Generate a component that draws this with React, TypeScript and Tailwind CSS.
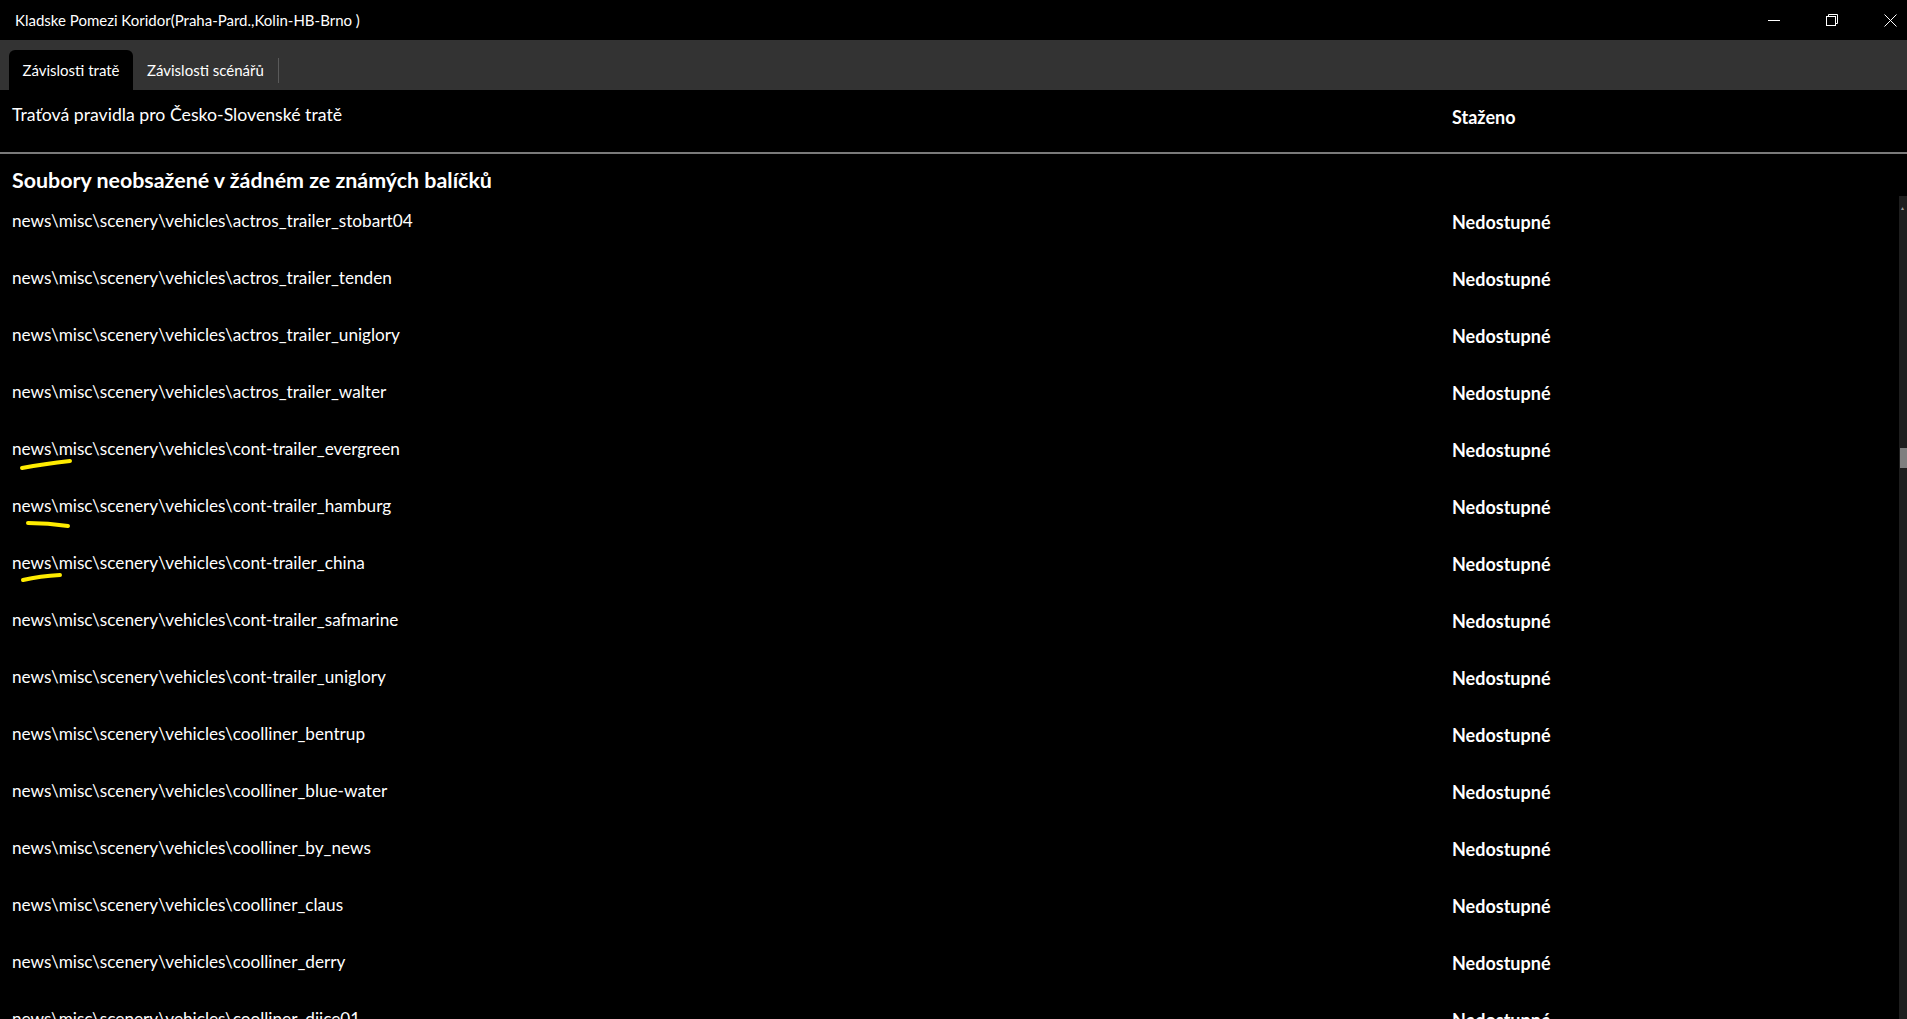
import React from "react";

const FONT = "font-['Lato','Open_Sans',sans-serif]";

const ROWS = [
  "actros_trailer_stobart04",
  "actros_trailer_tenden",
  "actros_trailer_uniglory",
  "actros_trailer_walter",
  "cont-trailer_evergreen",
  "cont-trailer_hamburg",
  "cont-trailer_china",
  "cont-trailer_safmarine",
  "cont-trailer_uniglory",
  "coolliner_bentrup",
  "coolliner_blue-water",
  "coolliner_by_news",
  "coolliner_claus",
  "coolliner_derry",
  "coolliner_djice01",
];

// hand-drawn highlighter marks under "news\" (row index -> path in row coords)
const MARKS: Record<number, string> = {
  4: "M22 44 Q44 40 70 37",
  5: "M28 42 Q48 42 68 45",
  6: "M23 42 Q40 38 60 37",
};

function TitleBar() {
  return (
    <div className="flex h-[40px] items-center justify-between bg-black text-white">
      <div className="pl-[15px] text-[15px]">Kladske Pomezi Koridor(Praha-Pard.,Kolin-HB-Brno )</div>
      <div className="flex h-full items-center gap-[24px]">
        <div className="flex h-full w-[34px] items-center justify-center">
          <svg width="12" height="12" viewBox="0 0 12 12">
            <path d="M0 6.5 H12" stroke="white" strokeWidth="1" />
          </svg>
        </div>
        <div className="flex h-full w-[34px] items-center justify-center">
          <svg width="12" height="12" viewBox="0 0 12 12" fill="none" stroke="white" strokeWidth="1">
            <rect x="0.5" y="2.5" width="9" height="9" />
            <path d="M2.5 2.5 V0.5 H11.5 V9.5 H9.5" />
          </svg>
        </div>
        <div className="flex h-full w-[34px] items-center justify-center">
          <svg width="13" height="13" viewBox="0 0 13 13" fill="none" stroke="white" strokeWidth="1">
            <path d="M0.5 0.5 L12.5 12.5 M12.5 0.5 L0.5 12.5" />
          </svg>
        </div>
      </div>
    </div>
  );
}

function Tabs() {
  return (
    <div className="flex h-[50px] items-end bg-[#333333] pl-[9px] text-[15px] text-white">
      <div className="flex h-[40px] w-[124px] items-center justify-center rounded-t-[6px] bg-black">
        Závislosti tratě
      </div>
      <div className="flex h-[40px] items-center px-[14px]">Závislosti scénářů</div>
      <div className="mb-[7px] h-[25px] w-px self-end bg-[#5a5a5a]" />
    </div>
  );
}

export default function App() {
  return (
    <div className={`${FONT} flex h-[1019px] w-[1907px] flex-col overflow-hidden bg-black text-white`}>
      <TitleBar />
      <Tabs />
      <div className="flex h-[62px] items-start pt-[12px] text-[17.7px]">
        <div className="w-[1452px] pl-[12px]">Traťová pravidla pro Česko-Slovenské tratě</div>
        <div className="pt-[2px] text-[18px] font-bold">Staženo</div>
      </div>
      <div className="h-[2px] bg-[#7a7a7a]" />
      <div className="h-[42px] pl-[12px] pt-[12px] text-[21.4px] leading-[28px] font-bold">
        Soubory neobsažené v žádném ze známých balíčků
      </div>
      <div className="flex min-h-0 flex-1">
        <div className="flex-1">
          {ROWS.map((name, i) => (
            <div key={name} className="relative flex h-[57px] items-center pb-[8px]">
              <div className="w-[1452px] pl-[12px] text-[17.2px]">news\misc\scenery\vehicles\{name}</div>
              <div className="pt-[4px] text-[18px] font-bold">Nedostupné</div>
              {MARKS[i] && (
                <svg className="pointer-events-none absolute left-0 top-0" width="90" height="57">
                  <path d={MARKS[i]} stroke="#ffec00" strokeWidth="4" strokeLinecap="round" fill="none" />
                </svg>
              )}
            </div>
          ))}
        </div>
        <div className="relative w-[8px] bg-[#1e1e1e]">
          <div className="absolute left-[2px] top-[9px] text-[6px] leading-none text-[#9a9a9a]">▴</div>
          <div className="absolute left-[1px] top-[252px] h-[20px] w-[7px] bg-[#7f7f7f]" />
        </div>
      </div>
    </div>
  );
}
